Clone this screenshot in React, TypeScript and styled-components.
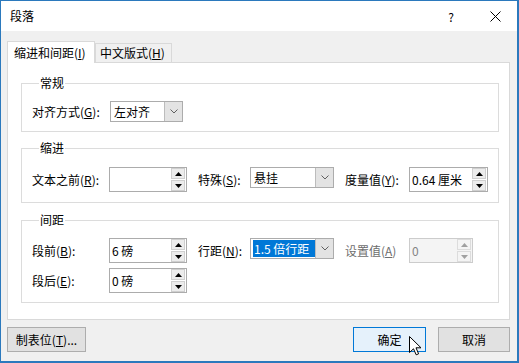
import React from "react";
import styled, { createGlobalStyle } from "styled-components";

const GlobalStyle = createGlobalStyle`
  html, body { margin: 0; padding: 0; background: #ffffff; }
  body {
    font-family: "Noto Sans CJK SC", "Noto Sans", sans-serif;
    font-size: 12px;
    color: #000;
  }
  * { box-sizing: border-box; }
`;

const Window = styled.div`
  width: 519px;
  height: 363px;
  border-style: solid;
  border-color: #2b79bd;
  border-width: 1px 2px 2px 1px;
  display: flex;
  flex-direction: column;
  background: #f0f0f0;
`;

const TitleBar = styled.div`
  height: 30px;
  flex: none;
  background: #ffffff;
  display: flex;
  align-items: center;
  padding-left: 9px;
`;

const Title = styled.span`
  flex: 1;
  line-height: 16px;
`;

const CaptionButton = styled.div`
  width: 44px;
  height: 30px;
  display: flex;
  align-items: center;
  justify-content: center;
  font-size: 12px;
`;

const Body = styled.div`
  flex: 1;
  display: flex;
  flex-direction: column;
  padding: 10px 7px 9px 6px;
`;

const TabStrip = styled.div`
  height: 22px;
  margin-bottom: -1px;
  display: flex;
  align-items: flex-end;
  position: relative;
  z-index: 1;
`;

const Tab = styled.div<{ $active?: boolean; $w: number; $pl: number }>`
  width: ${(p) => p.$w}px;
  height: ${(p) => (p.$active ? 22 : 19)}px;
  margin-bottom: ${(p) => (p.$active ? 0 : 1)}px;
  padding-left: ${(p) => p.$pl}px;
  border: 1px solid #d9d9d9;
  border-bottom: none;
  background: ${(p) => (p.$active ? "#ffffff" : "#f0f0f0")};
  display: flex;
  align-items: center;
  line-height: 16px;
  white-space: nowrap;
`;

const Panel = styled.div`
  height: 258px;
  border: 1px solid #d9d9d9;
  background: #ffffff;
  padding: 12px 10px 0 13px;
  display: flex;
  flex-direction: column;
`;

const Group = styled.fieldset<{ $pt: number; $pb: number; $mt: number }>`
  margin: ${(p) => p.$mt}px 0 0 0;
  min-width: 0;
  border: 1px solid #dcdcdc;
  padding: ${(p) => p.$pt}px 0 ${(p) => p.$pb}px 10px;
  display: flex;
  flex-direction: column;
  gap: 5px;
`;

const Legend = styled.legend`
  padding: 0 1px;
  margin-left: 7px;
  line-height: 16px;
  font-size: 12px;
`;

const Row = styled.div`
  display: flex;
  align-items: center;
`;

const Label = styled.span<{ $w: number; $disabled?: boolean }>`
  width: ${(p) => p.$w}px;
  flex: none;
  line-height: 16px;
  white-space: nowrap;
  color: ${(p) => (p.$disabled ? "#6d6d6d" : "#000")};
`;

const Gap = styled.span`
  width: 11px;
  flex: none;
`;

const SpinBox = styled.div<{ $w: number; $disabled?: boolean }>`
  width: ${(p) => p.$w}px;
  height: 25px;
  flex: none;
  border: 1px solid ${(p) => (p.$disabled ? "#cccccc" : "#acacac")};
  background: ${(p) => (p.$disabled ? "#f4f4f4" : "#ffffff")};
  display: flex;
  align-items: center;
  padding: 0 1px 0 2px;
`;

const SpinText = styled.span<{ $disabled?: boolean }>`
  flex: 1;
  line-height: 16px;
  white-space: nowrap;
  overflow: hidden;
  color: ${(p) => (p.$disabled ? "#838383" : "#000")};
`;

const SpinButtons = styled.div`
  width: 14px;
  height: 23px;
  flex: none;
  display: flex;
  flex-direction: column;
  gap: 1px;
`;

const SpinButton = styled.div<{ $disabled?: boolean }>`
  height: 11px;
  border: 1px solid ${(p) => (p.$disabled ? "#dcdcdc" : "#cfcfcf")};
  background: ${(p) => (p.$disabled ? "#f4f4f4" : "#ececec")};
  display: flex;
  align-items: center;
  justify-content: center;
`;

const Select = styled.div<{ $w: number }>`
  width: ${(p) => p.$w}px;
  height: 21px;
  flex: none;
  align-self: flex-start;
  border: 1px solid #acacac;
  background: #ffffff;
  display: flex;
`;

const SelectValue = styled.span<{ $selected?: boolean }>`
  flex: 1;
  white-space: nowrap;
  overflow: hidden;
  line-height: ${(p) => (p.$selected ? 17 : 19)}px;
  padding-left: ${(p) => (p.$selected ? 1 : 3)}px;
  margin: ${(p) => (p.$selected ? "1px 0 1px 2px" : "0")};
  background: ${(p) => (p.$selected ? "#0078d7" : "transparent")};
  color: ${(p) => (p.$selected ? "#ffffff" : "#000")};
`;

const SelectArrow = styled.div`
  width: 18px;
  flex: none;
  background: #e3e3e3;
  border-left: 1px solid #bcbcbc;
  display: flex;
  align-items: center;
  justify-content: center;
`;

const ButtonRow = styled.div`
  margin-top: 7px;
  height: 25px;
  display: flex;
  align-items: center;
  gap: 12px;
`;

const Spacer = styled.div`
  flex: 1;
`;

const Button = styled.button<{ $w: number; $primary?: boolean }>`
  width: ${(p) => p.$w}px;
  height: 25px;
  padding: 0;
  font-family: inherit;
  font-size: 12px;
  color: #000;
  border: 1px solid ${(p) => (p.$primary ? "#0078d7" : "#adadad")};
  background: ${(p) => (p.$primary ? "#e5f1fb" : "#e1e1e1")};
  position: relative;
  line-height: 16px;
`;

const Cursor = styled.svg`
  position: absolute;
  left: 55px;
  top: 8px;
`;

const Up = ({ disabled }: { disabled?: boolean }) => (
  <svg width="7" height="4" viewBox="0 0 7 4">
    <path d="M0 4 L3.5 0 L7 4 Z" fill={disabled ? "#a0a0a0" : "#000"} />
  </svg>
);

const Down = ({ disabled }: { disabled?: boolean }) => (
  <svg width="7" height="4" viewBox="0 0 7 4">
    <path d="M0 0 L3.5 4 L7 0 Z" fill={disabled ? "#a0a0a0" : "#000"} />
  </svg>
);

const Chevron = () => (
  <svg width="8" height="5" viewBox="0 0 8 5">
    <path d="M0.5 0.5 L4 4 L7.5 0.5" fill="none" stroke="#606060" strokeWidth="1" />
  </svg>
);

const Spin: React.FC<{ w: number; value: string; disabled?: boolean }> = ({ w, value, disabled }) => (
  <SpinBox $w={w} $disabled={disabled}>
    <SpinText $disabled={disabled}>{value}</SpinText>
    <SpinButtons>
      <SpinButton $disabled={disabled}>
        <Up disabled={disabled} />
      </SpinButton>
      <SpinButton $disabled={disabled}>
        <Down disabled={disabled} />
      </SpinButton>
    </SpinButtons>
  </SpinBox>
);

const Dropdown: React.FC<{ w: number; value: string; selected?: boolean }> = ({ w, value, selected }) => (
  <Select $w={w}>
    <SelectValue $selected={selected}>{value}</SelectValue>
    <SelectArrow>
      <Chevron />
    </SelectArrow>
  </Select>
);

export default function App() {
  return (
    <>
      <GlobalStyle />
      <Window>
        <TitleBar>
          <Title>段落</Title>
          <CaptionButton>?</CaptionButton>
          <CaptionButton>
            <svg width="11" height="11" viewBox="0 0 11 11">
              <path d="M0.5 0.5 L10.5 10.5 M10.5 0.5 L0.5 10.5" stroke="#000" strokeWidth="1" />
            </svg>
          </CaptionButton>
        </TitleBar>
        <Body>
          <TabStrip>
            <Tab $active $w={88} $pl={6}>
              缩进和间距(<u>I</u>)
            </Tab>
            <Tab $w={77} $pl={4}>
              中文版式(<u>H</u>)
            </Tab>
          </TabStrip>
          <Panel>
            <Group $mt={0} $pt={10} $pb={9}>
              <Legend>常规</Legend>
              <Row>
                <Label $w={78}>
                  对齐方式(<u>G</u>):
                </Label>
                <Dropdown w={73} value="左对齐" />
              </Row>
            </Group>
            <Group $mt={8} $pt={11} $pb={10}>
              <Legend>缩进</Legend>
              <Row>
                <Label $w={77}>
                  文本之前(<u>R</u>):
                </Label>
                <Spin w={78} value="" />
                <Gap />
                <Label $w={52}>
                  特殊(<u>S</u>):
                </Label>
                <Dropdown w={84} value="悬挂" />
                <Gap />
                <Label $w={64}>
                  度量值(<u>Y</u>):
                </Label>
                <Spin w={79} value="0.64 厘米" />
              </Row>
            </Group>
            <Group $mt={9} $pt={10} $pb={9}>
              <Legend>间距</Legend>
              <Row>
                <Label $w={77}>
                  段前(<u>B</u>):
                </Label>
                <Spin w={78} value="6 磅" />
                <Gap />
                <Label $w={52}>
                  行距(<u>N</u>):
                </Label>
                <Dropdown w={84} value="1.5 倍行距" selected />
                <Gap />
                <Label $w={64} $disabled>
                  设置值(<u>A</u>)
                </Label>
                <Spin w={64} value="0" disabled />
              </Row>
              <Row>
                <Label $w={77}>
                  段后(<u>E</u>):
                </Label>
                <Spin w={78} value="0 磅" />
              </Row>
            </Group>
          </Panel>
          <ButtonRow>
            <Button $w={79}>
              制表位(<u>T</u>)...
            </Button>
            <Spacer />
            <Button $w={73} $primary>
              确定
              <Cursor width="14" height="20" viewBox="0 0 14 20">
                <path
                  d="M0.5 0.5 L0.5 16.5 L4.5 12.8 L7.2 18.8 L9.6 17.8 L7 11.8 L12 11.8 Z"
                  fill="#fff"
                  stroke="#000"
                  strokeWidth="1"
                  strokeLinejoin="miter"
                />
              </Cursor>
            </Button>
            <Button $w={72}>取消</Button>
          </ButtonRow>
        </Body>
      </Window>
    </>
  );
}
